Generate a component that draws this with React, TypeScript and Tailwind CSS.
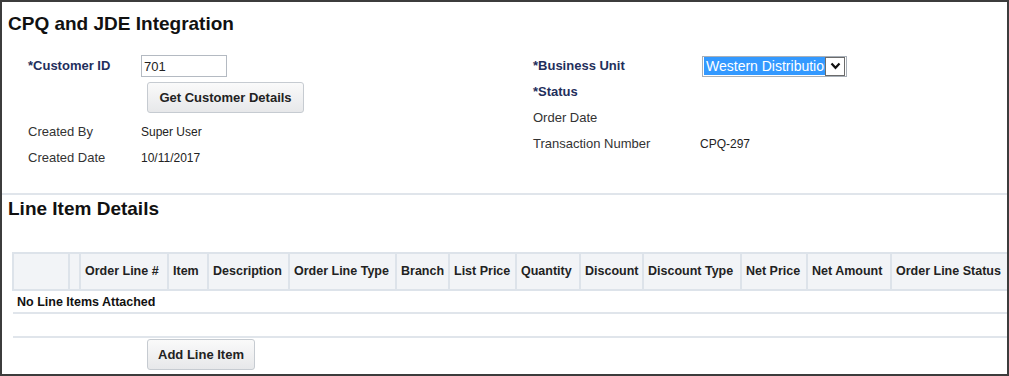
import React from 'react';

const headers: { label: string; w: number }[] = [
  { label: '', w: 56 },
  { label: '', w: 11 },
  { label: 'Order Line #', w: 88 },
  { label: 'Item', w: 40 },
  { label: 'Description', w: 81 },
  { label: 'Order Line Type', w: 107 },
  { label: 'Branch', w: 53 },
  { label: 'List Price', w: 67 },
  { label: 'Quantity', w: 64 },
  { label: 'Discount', w: 63 },
  { label: 'Discount Type', w: 98 },
  { label: 'Net Price', w: 66 },
  { label: 'Net Amount', w: 84 },
  { label: 'Order Line Status', w: 117 },
];

const App: React.FC = () => {
  return (
    <div className="w-[1009px] h-[376px] border-2 border-[#3c3c3c] bg-white font-['Liberation_Sans',Arial,sans-serif] text-[#333] overflow-hidden">
      {/* Header section */}
      <div className="h-[191px]">
        <h1 className="pt-[11px] pl-[6px] leading-[22px] text-[19px] font-bold text-[#111]">CPQ and JDE Integration</h1>

        <div className="flex mt-[18px]">
          {/* Left column */}
          <div className="ml-[26px] mt-[2px] w-[505px]">
            <div className="flex items-center h-[22px]">
              <span className="w-[113px] text-[13px] font-bold text-[#1f2f5c]">*Customer ID</span>
              <input
                defaultValue="701"
                className="w-[86px] h-[22px] border border-[#b4bac2] px-[2px] text-[13px] text-[#222] outline-none"
              />
            </div>
            <button className="mt-[5px] ml-[119px] w-[157px] h-[31px] rounded-[3px] border border-[#c6cbd1] bg-gradient-to-b from-[#fafafa] to-[#e7e8ea] text-[13px] font-bold text-[#222]">
              Get Customer Details
            </button>
            <div className="mt-[6px] flex items-center h-[26px]">
              <span className="w-[113px] text-[13px]">Created By</span>
              <span className="text-[12px] text-[#222]">Super User</span>
            </div>
            <div className="flex items-center h-[26px]">
              <span className="w-[113px] text-[13px]">Created Date</span>
              <span className="text-[12px] text-[#222]">10/11/2017</span>
            </div>
          </div>

          {/* Right column */}
          <div>
            <div className="flex items-center h-[26px]">
              <span className="w-[167px] text-[13px] font-bold text-[#1f2f5c]">*Business Unit</span>
              <div className="ml-[2px] flex items-center w-[145px] h-[21px] border border-[#a9b0b8] bg-white">
                <span className="ml-[1px] w-[121px] h-[18px] bg-[#3399ff] text-white text-[14px] leading-[18px] pl-[2px] overflow-hidden whitespace-nowrap">
                  Western Distribution
                </span>
                <span className="w-[20px] h-[19px] border border-[#6b6b6b] bg-white flex items-center justify-center">
                  <svg width="11" height="8" viewBox="0 0 11 8" fill="none">
                    <path d="M1.5 1.5 L5.5 5.8 L9.5 1.5" stroke="#111" strokeWidth="2.2" />
                  </svg>
                </span>
              </div>
            </div>
            <div className="flex items-center h-[26px]">
              <span className="text-[13px] font-bold text-[#1f2f5c]">*Status</span>
            </div>
            <div className="flex items-center h-[26px]">
              <span className="text-[13px]">Order Date</span>
            </div>
            <div className="flex items-center h-[26px]">
              <span className="w-[167px] text-[13px]">Transaction Number</span>
              <span className="text-[12px] text-[#222]">CPQ-297</span>
            </div>
          </div>
        </div>
      </div>

      <div className="border-t-2 border-[#e0e5eb]" />

      {/* Line items */}
      <h2 className="pt-[3px] pl-[6px] leading-[22px] text-[19px] font-bold text-[#111]">Line Item Details</h2>

      <table className="mt-[32px] ml-[10px] w-[995px] table-fixed border-collapse">
        <colgroup>
          {headers.map((h, i) => (
            <col key={i} style={{ width: h.w }} />
          ))}
        </colgroup>
        <thead>
          <tr className="h-[37px] bg-[#f2f4f7]">
            {headers.map((h, i) => (
              <th
                key={i}
                className="border-2 border-[#dde3ea] px-[4px] text-left text-[12.5px] font-bold text-[#222] whitespace-nowrap overflow-hidden"
              >
                {h.label}
              </th>
            ))}
          </tr>
        </thead>
        <tbody>
          <tr className="h-[23px] border-b-2 border-[#e0e5eb]">
            <td colSpan={14} className="pl-[4px] pt-[2px] text-[12.5px] font-bold text-[#111]">
              No Line Items Attached
            </td>
          </tr>
          <tr className="h-[24px] border-b-2 border-[#e0e5eb]">
            <td colSpan={14} />
          </tr>
        </tbody>
      </table>

      <button className="mt-[1px] ml-[145px] w-[108px] h-[31px] rounded-[3px] border border-[#c6cbd1] bg-gradient-to-b from-[#fafafa] to-[#e7e8ea] text-[13px] font-bold text-[#222]">
        Add Line Item
      </button>
    </div>
  );
};

export default App;
